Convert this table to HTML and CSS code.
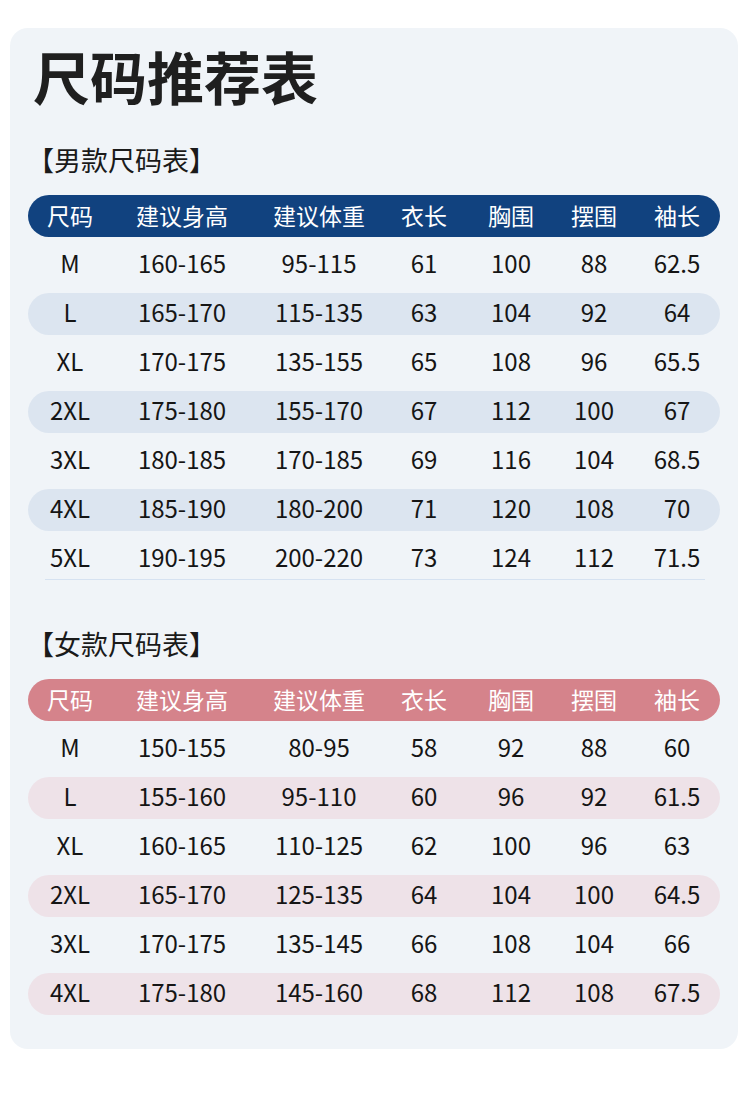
FILE: index.html
```html
<!DOCTYPE html>
<html lang="zh-CN">
<head>
<meta charset="utf-8">
<title>尺码推荐表</title>
<link rel="stylesheet" href="styles.css">
</head>
<body>
<div class="card">
  <h1 class="title">尺码推荐表</h1>

  <h2 class="section">【男款尺码表】</h2>
  <div class="table men">
    <div class="row head"><span>尺码</span><span>建议身高</span><span>建议体重</span><span>衣长</span><span>胸围</span><span>摆围</span><span>袖长</span></div>
    <div class="row"><span>M</span><span>160-165</span><span>95-115</span><span>61</span><span>100</span><span>88</span><span>62.5</span></div>
    <div class="row alt"><span>L</span><span>165-170</span><span>115-135</span><span>63</span><span>104</span><span>92</span><span>64</span></div>
    <div class="row"><span>XL</span><span>170-175</span><span>135-155</span><span>65</span><span>108</span><span>96</span><span>65.5</span></div>
    <div class="row alt"><span>2XL</span><span>175-180</span><span>155-170</span><span>67</span><span>112</span><span>100</span><span>67</span></div>
    <div class="row"><span>3XL</span><span>180-185</span><span>170-185</span><span>69</span><span>116</span><span>104</span><span>68.5</span></div>
    <div class="row alt"><span>4XL</span><span>185-190</span><span>180-200</span><span>71</span><span>120</span><span>108</span><span>70</span></div>
    <div class="row last"><span>5XL</span><span>190-195</span><span>200-220</span><span>73</span><span>124</span><span>112</span><span>71.5</span></div>
  </div>

  <h2 class="section women-title">【女款尺码表】</h2>
  <div class="table women">
    <div class="row head"><span>尺码</span><span>建议身高</span><span>建议体重</span><span>衣长</span><span>胸围</span><span>摆围</span><span>袖长</span></div>
    <div class="row"><span>M</span><span>150-155</span><span>80-95</span><span>58</span><span>92</span><span>88</span><span>60</span></div>
    <div class="row alt"><span>L</span><span>155-160</span><span>95-110</span><span>60</span><span>96</span><span>92</span><span>61.5</span></div>
    <div class="row"><span>XL</span><span>160-165</span><span>110-125</span><span>62</span><span>100</span><span>96</span><span>63</span></div>
    <div class="row alt"><span>2XL</span><span>165-170</span><span>125-135</span><span>64</span><span>104</span><span>100</span><span>64.5</span></div>
    <div class="row"><span>3XL</span><span>170-175</span><span>135-145</span><span>66</span><span>108</span><span>104</span><span>66</span></div>
    <div class="row alt"><span>4XL</span><span>175-180</span><span>145-160</span><span>68</span><span>112</span><span>108</span><span>67.5</span></div>
  </div>
</div>
</body>
</html>
```

FILE: styles.css
```css
html, body {
  margin: 0;
  padding: 0;
  background: #ffffff;
}

body {
  font-family: "Noto Sans CJK SC", "Noto Sans", sans-serif;
  color: #151515;
}

.card {
  margin: 28px 0 0 10px;
  width: 728px;
  box-sizing: border-box;
  padding: 18px 18px 34px 18px;
  background: #f0f4f8;
  border-radius: 18px;
}

.title {
  margin: 0 0 0 5px;
  font-size: 57px;
  line-height: 58px;
  font-weight: 700;
  color: #1f1f1f;
}

.section {
  margin: 42px 0 22px -1px;
  font-size: 27px;
  line-height: 27px;
  font-weight: 400;
  color: #1a1a1a;
}

.women-title {
  margin-top: 50px;
}

.table {
  display: flex;
  flex-direction: column;
  gap: 7px;
}

.row {
  display: grid;
  grid-template-columns: 84px 140px 134px 76px 98px 68px 92px;
  height: 42px;
  box-sizing: border-box;
  padding-bottom: 5px;
  align-items: center;
  border-radius: 21px;
  font-size: 24px;
  line-height: 30px;
  color: #151515;
  position: relative;
}

.row span {
  text-align: center;
  white-space: nowrap;
}

.row span:last-child {
  padding-left: 6px;
}

.row.head {
  padding-bottom: 3px;
  font-size: 23px;
  color: #ffffff;
}

.men .head {
  background: #11427f;
}

.men .alt {
  background: #dce5f0;
}

.women .head {
  background: #d5838b;
}

.women .alt {
  background: #eee2e8;
}

.row.last::after {
  content: "";
  position: absolute;
  left: 17px;
  right: 15px;
  bottom: 0;
  height: 1px;
  background: #d6e2f1;
}
```
